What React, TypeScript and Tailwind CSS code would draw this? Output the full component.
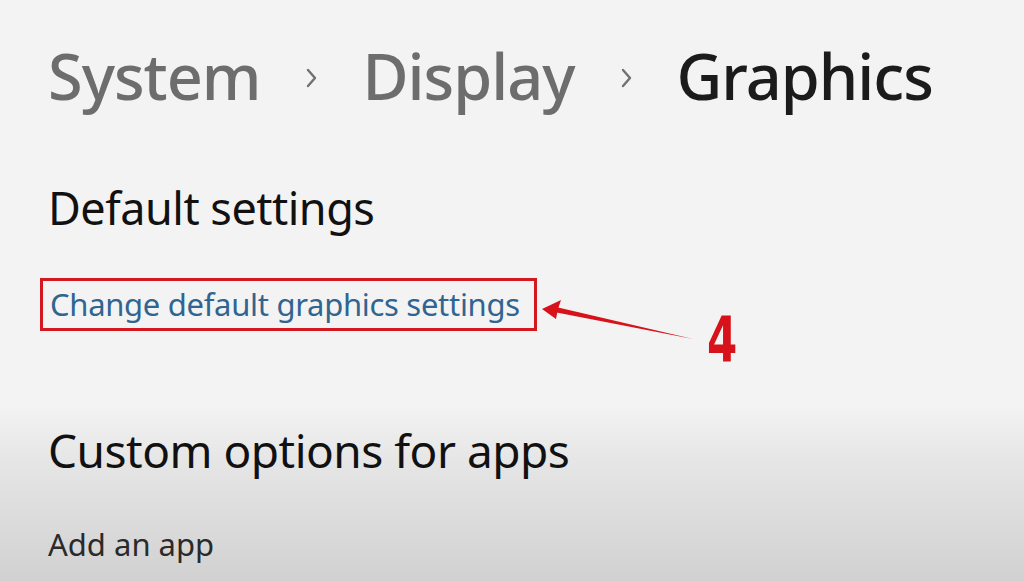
import React from 'react';

const Chevron = () => (
  <svg width="14" height="22" viewBox="0 0 14 22" className="mx-[44px] self-start mt-[35px]">
    <path d="M4 3 L11 11 L4 19" fill="none" stroke="#707070" strokeWidth="2.4" strokeLinecap="round" strokeLinejoin="round" />
  </svg>
);

const Annotation = () => (
  <div className="absolute left-0 top-0 w-[1024px] h-[581px] pointer-events-none">
    <svg width="1024" height="581" className="absolute left-0 top-0">
      <polygon points="693,339 556,307 554,312" fill="#d8121b" />
      <polygon points="542,309 561,300 558,309 556,319" fill="#d8121b" />
    </svg>
    <span className="absolute left-[707px] top-[309px] origin-left scale-x-[0.78] text-[62px] leading-none font-bold text-[#d8121b] [font-family:'Liberation_Sans_Narrow','DejaVu_Sans_Condensed',sans-serif]">
      4
    </span>
  </div>
);

export default function App() {
  return (
    <div className="relative w-[1024px] h-[581px] overflow-hidden bg-[linear-gradient(180deg,#f3f3f3_0px,#f3f3f3_405px,#e6e6e6_460px,#d1d1d1_581px)] [font-family:'Noto_Sans','Open_Sans',sans-serif]">
      <div className="flex flex-col pl-[48px] pt-[32px]">
        <div className="flex items-baseline text-[63px] leading-[88px] font-medium tracking-[-1px]">
          <span className="text-[#6d6d6d]">System</span>
          <Chevron />
          <span className="text-[#6d6d6d]">Display</span>
          <Chevron />
          <span className="text-[#1b1b1b]">Graphics</span>
        </div>

        <h2 className="mt-[60px] text-[45px] leading-[56px] font-normal text-[#111] tracking-[-0.5px]">Default settings</h2>

        <div className="mt-[42px] -ml-[8px]">
          <a className="inline-block border-[3px] border-[#d41820] pl-[7px] pr-[14px] h-[53px] leading-[47px] text-[31px] text-[#2f6590] tracking-[-0.3px]">
            Change default graphics settings
          </a>
        </div>

        <h2 className="mt-[91px] text-[46px] leading-[56px] font-normal text-[#111] tracking-[-0.5px]">Custom options for apps</h2>

        <p className="mt-[46px] text-[31px] leading-[40px] text-[#2a2a2a] tracking-[0px]">Add an app</p>
      </div>
      <Annotation />
    </div>
  );
}
